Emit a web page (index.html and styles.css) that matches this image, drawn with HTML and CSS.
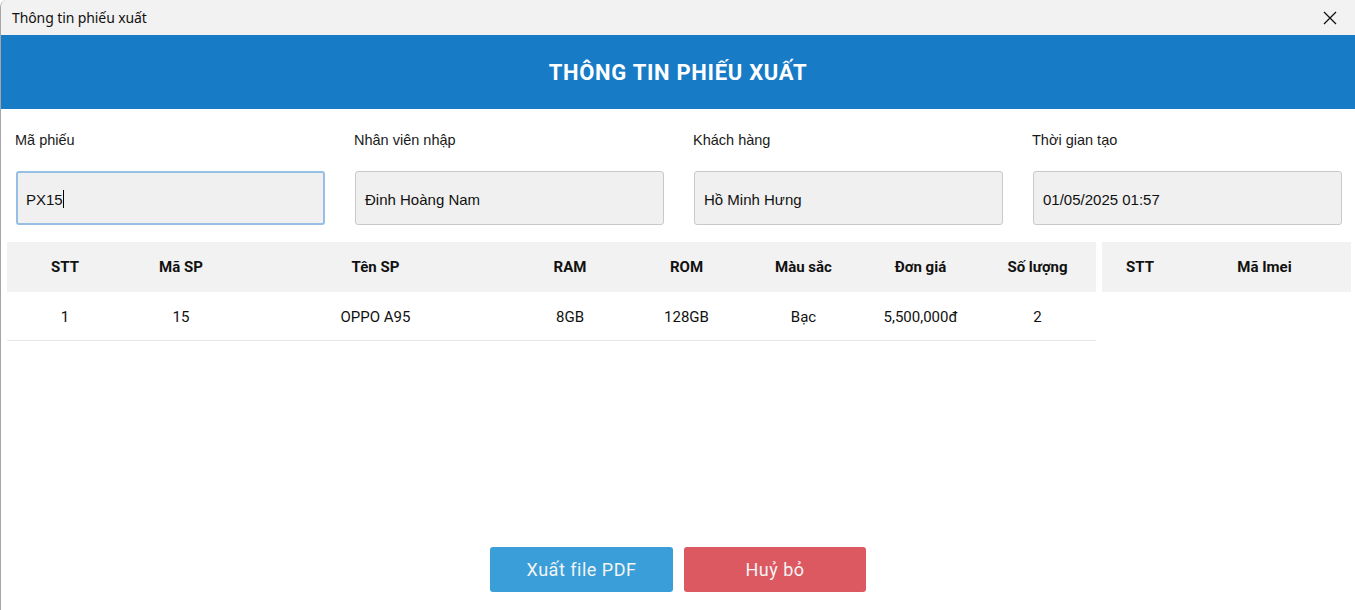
FILE: index.html
```html
<!DOCTYPE html>
<html lang="vi">
<head>
<meta charset="utf-8">
<title>Thông tin phiếu xuất</title>
<link rel="stylesheet" href="styles.css">
</head>
<body>
<div class="window">
  <div class="titlebar">
    <span class="title">Thông tin phiếu xuất</span>
    <span class="close">
      <svg width="14" height="14" viewBox="0 0 14 14"><path d="M1 1 L13 13 M13 1 L1 13" stroke="#111" stroke-width="1.3" fill="none"/></svg>
    </span>
  </div>
  <div class="header">THÔNG TIN PHIẾU XUẤT</div>
  <div class="form">
    <div class="field">
      <label class="label">Mã phiếu</label>
      <div class="input focused"><span>PX15</span><span class="caret"></span></div>
    </div>
    <div class="field">
      <label class="label">Nhân viên nhập</label>
      <div class="input"><span>Đinh Hoàng Nam</span></div>
    </div>
    <div class="field">
      <label class="label">Khách hàng</label>
      <div class="input"><span>Hồ Minh Hưng</span></div>
    </div>
    <div class="field">
      <label class="label">Thời gian tạo</label>
      <div class="input"><span>01/05/2025 01:57</span></div>
    </div>
  </div>
  <div class="tables">
    <div class="table main">
      <div class="row head">
        <div>STT</div><div>Mã SP</div><div>Tên SP</div><div>RAM</div><div>ROM</div><div>Màu sắc</div><div>Đơn giá</div><div>Số lượng</div>
      </div>
      <div class="row body">
        <div>1</div><div>15</div><div>OPPO A95</div><div>8GB</div><div>128GB</div><div>Bạc</div><div>5,500,000đ</div><div>2</div>
      </div>
    </div>
    <div class="table imei">
      <div class="row head">
        <div>STT</div><div>Mã Imei</div>
      </div>
    </div>
  </div>
  <div class="footer">
    <button class="btn blue">Xuất file PDF</button>
    <button class="btn red">Huỷ bỏ</button>
  </div>
</div>
</body>
</html>
```
FILE: styles.css
```css
* { box-sizing: border-box; }
html, body { margin: 0; padding: 0; background: #fff; }
body { width: 1355px; height: 610px; overflow: hidden; }
.window {
  height: 610px;
  display: flex;
  flex-direction: column;
  border-left: 1px solid #a6a6a6;
  border-top-left-radius: 7px;
  background: #fff;
  font-family: "Liberation Sans", Arial, sans-serif;
  color: #111;
}
.titlebar {
  height: 35px;
  flex: none;
  background: #f2f2f2;
  display: flex;
  align-items: center;
  justify-content: space-between;
  padding: 0 18px 0 11px;
  border-top-left-radius: 7px;
}
.title { font-family: "Noto Sans", "Liberation Sans", sans-serif; font-size: 14px; color: #111; letter-spacing: -0.1px; }
.close { display: flex; align-items: center; }
.header {
  height: 74px;
  flex: none;
  background: #187bc6;
  color: #fff;
  font-family: Roboto, "Liberation Sans", sans-serif;
  font-weight: 700;
  font-size: 22px;
  display: flex;
  align-items: center;
  justify-content: center;
  letter-spacing: 0.7px;
}
.form {
  flex: none;
  display: grid;
  grid-template-columns: repeat(4, 309px);
  column-gap: 30px;
  padding: 21px 0 0 15px;
  height: 133px;
}
.field { display: flex; flex-direction: column; }
.label { font-size: 14.5px; height: 20px; line-height: 20px; margin-left: -1px; color: #1a1a1a; }
.input {
  flex: none;
  margin-top: 21px;
  height: 54px;
  background: #f0f0f0;
  border: 1px solid #c9c9c9;
  border-radius: 3px;
  display: flex;
  align-items: center;
  padding-left: 9px;
  padding-top: 2px;
  font-size: 15px;
  color: #111;
}
.input.focused { border: 2px solid #97bfe6; padding-left: 8px; }
.caret { display: inline-block; width: 1px; height: 18px; background: #000; }
.tables {
  flex: 1;
  display: flex;
  gap: 6px;
  padding-left: 6px;
  font-family: Roboto, "Liberation Sans", sans-serif;
  font-size: 15px;
}
.table.main { width: 1089px; }
.table.imei { width: 249px; }
.row { display: grid; align-items: center; text-align: center; }
.main .row { grid-template-columns: 116px 116px 273px 116px 117px 117px 117px 117px; }
.imei .row { grid-template-columns: 76px 173px; }
.row.head { height: 50px; background: #f2f2f2; font-weight: 700; color: #111; }
.row.body { height: 49px; padding-top: 2px; border-bottom: 1px solid #e6e6e6; color: #111; }
.footer {
  flex: none;
  display: flex;
  justify-content: center;
  gap: 11px;
  padding-bottom: 18px;
}
.btn {
  height: 45px;
  border: none;
  border-radius: 3px;
  color: #f4f4f4;
  font-family: Roboto, "Liberation Sans", sans-serif;
  font-size: 18px;
  letter-spacing: 0.5px;
  padding-top: 1px;
}
.btn.blue { width: 183px; background: #3a9fd8; }
.btn.red { width: 182px; background: #dc5962; }
```
